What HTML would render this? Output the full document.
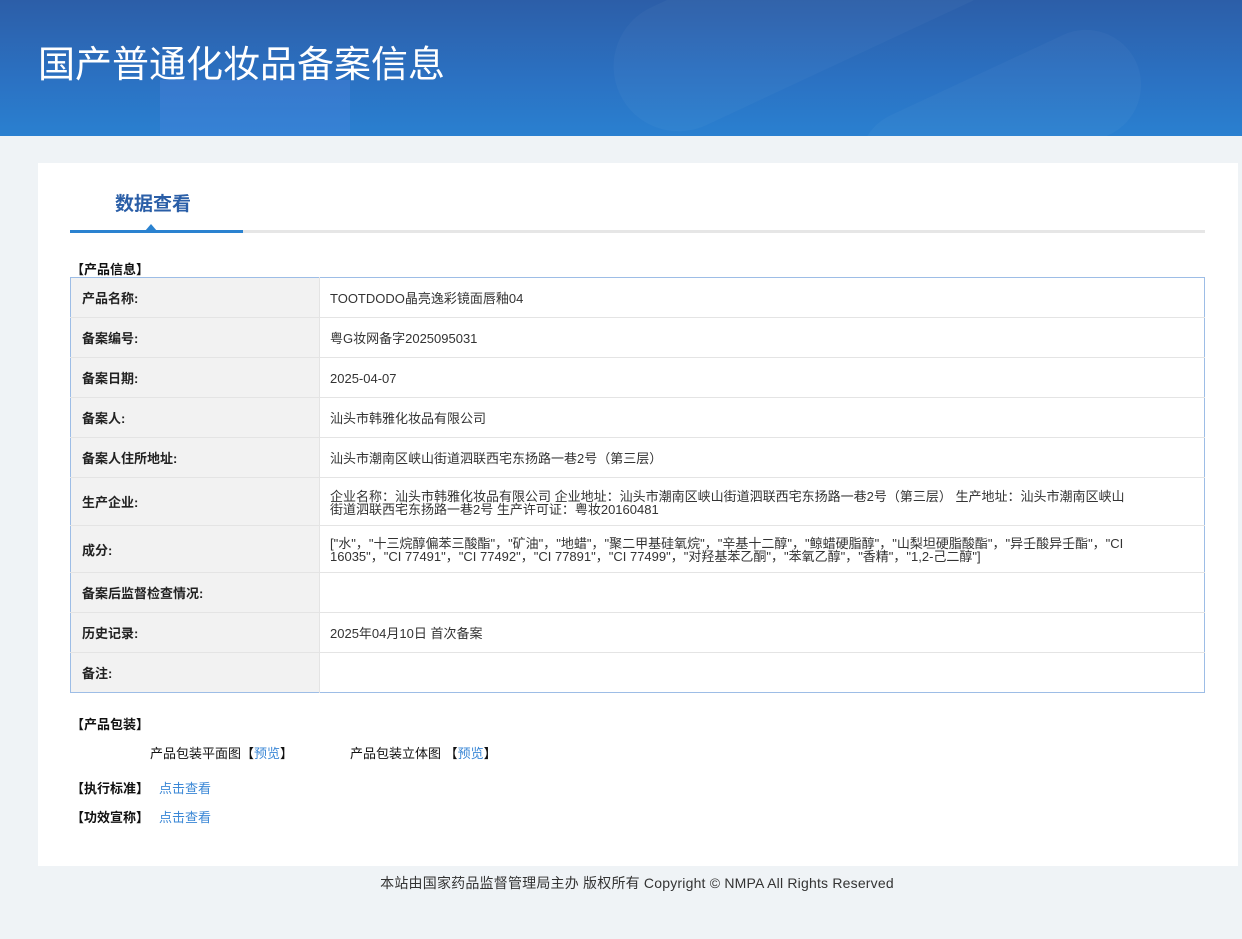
<!DOCTYPE html>
<html><head><meta charset="utf-8"><style>
*{margin:0;padding:0;box-sizing:border-box}
body{width:1242px;height:939px;background:#eff3f6;font-family:"Liberation Sans","Noto Sans CJK SC",sans-serif;font-size:13px;color:#333;position:relative;overflow:hidden}
.hd{position:absolute;left:0;top:0;width:1242px;height:136px;background:linear-gradient(180deg,#2c5ea8 0%,#2b72c3 60%,#2a80d0 100%);overflow:hidden}
.hd h1{position:absolute;left:38px;top:34px;font-size:37px;font-weight:normal;color:#fff;font-family:"Noto Sans CJK SC",sans-serif}
.card{position:absolute;left:38px;top:163px;width:1200px;height:703px;background:#fff}
.tab{position:absolute;left:77px;top:26px;font-size:19px;font-weight:bold;color:#2a5ea7}
.line{position:absolute;left:32px;top:67px;width:1135px;height:3px;background:#e6e6e6}
.line i{position:absolute;left:0;top:0;width:173px;height:3px;background:#2a82d0}
.tri{position:absolute;left:107px;top:61px;width:0;height:0;border-left:6px solid transparent;border-right:6px solid transparent;border-bottom:7px solid #2a82d0}
.sec{position:absolute;font-weight:bold;color:#111;font-size:13px}
table{position:absolute;left:32px;top:114px;width:1135px;border-collapse:collapse;border:1px solid #9dbde6}
td{border-bottom:1px solid #e4e4e4;height:40px;vertical-align:middle;line-height:13px;padding-top:2px}
td.l{width:249px;background:#f2f2f2;font-weight:bold;padding-left:11px;color:#222;border-right:1px solid #e4e4e4}
td.v{padding-left:10px;color:#333}
a{color:#3a87d6;text-decoration:none}
.ft{position:absolute;top:873px;left:0;width:1274px;text-align:center;color:#333;font-size:14px;letter-spacing:0.2px}
</style></head><body>
<div class="hd">
<div style="position:absolute;left:600px;top:-60px;width:420px;height:130px;border-radius:70px;background:rgba(255,255,255,0.03);transform:rotate(-25deg)"></div>
<div style="position:absolute;left:850px;top:70px;width:300px;height:110px;border-radius:60px;background:rgba(255,255,255,0.03);transform:rotate(-25deg)"></div>
<div style="position:absolute;left:160px;top:80px;width:190px;height:60px;background:rgba(90,140,230,0.25)"></div>
<h1>国产普通化妆品备案信息</h1></div>
<div class="card">
<div class="tab">数据查看</div>
<div class="line"><i></i></div><div class="tri"></div>
<div class="sec" style="left:33px;top:96px">【产品信息】</div>
<table>
<tr><td class="l">产品名称:</td><td class="v">TOOTDODO晶亮逸彩镜面唇釉04</td></tr>
<tr><td class="l">备案编号:</td><td class="v">粤G妆网备字2025095031</td></tr>
<tr><td class="l">备案日期:</td><td class="v">2025-04-07</td></tr>
<tr><td class="l">备案人:</td><td class="v">汕头市韩雅化妆品有限公司</td></tr>
<tr><td class="l">备案人住所地址:</td><td class="v">汕头市潮南区峡山街道泗联西宅东扬路一巷2号（第三层）</td></tr>
<tr><td class="l" style="height:48px">生产企业:</td><td class="v" style="padding-right:75px">企业名称：汕头市韩雅化妆品有限公司 企业地址：汕头市潮南区峡山街道泗联西宅东扬路一巷2号（第三层） 生产地址：汕头市潮南区峡山街道泗联西宅东扬路一巷2号 生产许可证：粤妆20160481</td></tr>
<tr><td class="l" style="height:47px">成分:</td><td class="v" style="padding-right:80px">["水"，"十三烷醇偏苯三酸酯"，"矿油"，"地蜡"，"聚二甲基硅氧烷"，"辛基十二醇"，"鲸蜡硬脂醇"，"山梨坦硬脂酸酯"，"异壬酸异壬酯"，"CI 16035"，"CI 77491"，"CI 77492"，"CI 77891"，"CI 77499"，"对羟基苯乙酮"，"苯氧乙醇"，"香精"，"1,2-己二醇"]</td></tr>
<tr><td class="l">备案后监督检查情况:</td><td class="v"></td></tr>
<tr><td class="l">历史记录:</td><td class="v">2025年04月10日 首次备案</td></tr>
<tr><td class="l" style="border-bottom:none">备注:</td><td class="v" style="border-bottom:none"></td></tr>
</table>
<div class="sec" style="left:33px;top:551px">【产品包装】</div>
<div style="position:absolute;left:112px;top:580px;color:#111">产品包装平面图【<a>预览</a>】</div>
<div style="position:absolute;left:312px;top:580px;color:#111">产品包装立体图 【<a>预览</a>】</div>
<div class="sec" style="left:33px;top:615px">【执行标准】</div><a style="position:absolute;left:121px;top:615px">点击查看</a>
<div class="sec" style="left:33px;top:644px">【功效宣称】</div><a style="position:absolute;left:121px;top:644px">点击查看</a>
</div>
<div class="ft">本站由国家药品监督管理局主办 版权所有 Copyright © NMPA All Rights Reserved</div>
</body></html>
